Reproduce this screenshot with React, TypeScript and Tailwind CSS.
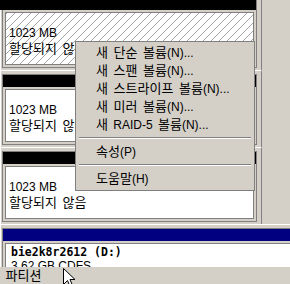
import React from 'react';

const menuItems: (string | null)[] = [
  '새 단순 볼륨(N)...',
  '새 스팬 볼륨(N)...',
  '새 스트라이프 볼륨(N)...',
  '새 미러 볼륨(N)...',
  '새 RAID-5 볼륨(N)...',
  null,
  '속성(P)',
  null,
  '도움말(H)',
];

const Ko: React.FC<{ text: string }> = ({ text }) => (
  <>
    {text.split(/([가-힣][가-힣 ]*[가-힣]|[가-힣])/).map((part, i) =>
      /[가-힣]/.test(part) ? (
        <span key={i} className="text-[13px] [word-spacing:2px]">
          {part}
        </span>
      ) : (
        <span key={i} className="[word-spacing:2px]">{part}</span>
      )
    )}
  </>
);

// selected volume gets the diagonal hatch
const hatch =
  'bg-[image:repeating-linear-gradient(135deg,#a4a4a4_0px,#a4a4a4_1px,#ffffff_1px,#ffffff_5.66px)]';

const UnallocatedRow: React.FC<{ selected?: boolean }> = ({ selected }) => (
  <div className="h-[77px] w-[262px] shrink-0 border-t border-l border-t-white border-l-white border-r border-r-[#808080] pt-[3px] pl-[1px] pr-[4px] pb-[2px]">
    <div className="w-[255px] border border-[#808080]">
      <div className={selected ? 'h-[12px] bg-black -ml-[3px]' : 'h-[12px] bg-black'} />
      <div className="p-[2px]">
        <div
          className={`h-[53px] border border-[#808080] pl-[3px] pt-[13px] text-[12px] leading-[15px] text-black whitespace-nowrap ${
            selected ? hatch : 'bg-white'
          }`}
        >
          <div>1023 MB</div>
          <div>
            <Ko text="할당되지 않음" />
          </div>
        </div>
      </div>
    </div>
  </div>
);

const CdRow: React.FC = () => (
  <div className="h-[77px] w-[400px] shrink-0 border-t border-l border-white pt-[3px] pl-[1px]">
    <div className="border border-[#808080]">
      <div className="h-[12px] bg-[#000080]" />
      <div className="p-[2px]">
        <div className="h-[53px] border border-[#808080] bg-white pl-[5px] pt-[2px] text-black whitespace-nowrap">
          <div className="font-['DejaVu_Sans_Mono',monospace] font-bold text-[11.5px] leading-[12px]">
            bie2k8r2612 (D:)
          </div>
          <div className="mt-[2px] text-[12px] leading-[12px]">3.62 GB CDFS</div>
        </div>
      </div>
    </div>
  </div>
);

const Cursor: React.FC = () => (
  <svg className="absolute left-[63px] top-[268px]" width="13" height="20" viewBox="0 0 13 20">
    <path
      d="M0.5 0.5 L0.5 16.5 L4.5 12.5 L7 18.5 L9.5 17.5 L7 11.5 L12 11.5 Z"
      fill="#ffffff"
      stroke="#000000"
      strokeWidth="1"
    />
  </svg>
);

export default function App() {
  return (
    <div className="relative w-[290px] h-[284px] overflow-hidden bg-[#d4d0c8] font-['Liberation_Sans','Noto_Sans_CJK_KR',sans-serif] text-black">
      <div className="h-[267px] overflow-hidden">
        <div className="-mt-[7px] flex flex-col">
          <UnallocatedRow selected />
          <UnallocatedRow />
          <UnallocatedRow />
          <CdRow />
        </div>
      </div>
      <div className="h-[17px] flex items-center text-[12px] leading-[17px] whitespace-nowrap">
        <span className="-ml-[12px]">
          <Ko text="주 파티션" />
        </span>
      </div>

      {/* context menu */}
      <div className="absolute left-[75px] top-[41px] w-[180px] border border-[#808080] bg-[#d4d0c8] py-[2px]">
        {menuItems.map((item, i) =>
          item === null ? (
            <div key={i} className="h-[9px] px-[3px] pt-[3px]">
              <div className="h-[1px] bg-[#808080]" />
              <div className="h-[1px] bg-white" />
            </div>
          ) : (
            <div key={i} className="h-[18px] leading-[18px] pl-[20px] text-[12px] whitespace-nowrap">
              <Ko text={item} />
            </div>
          )
        )}
      </div>

      <Cursor />
    </div>
  );
}
